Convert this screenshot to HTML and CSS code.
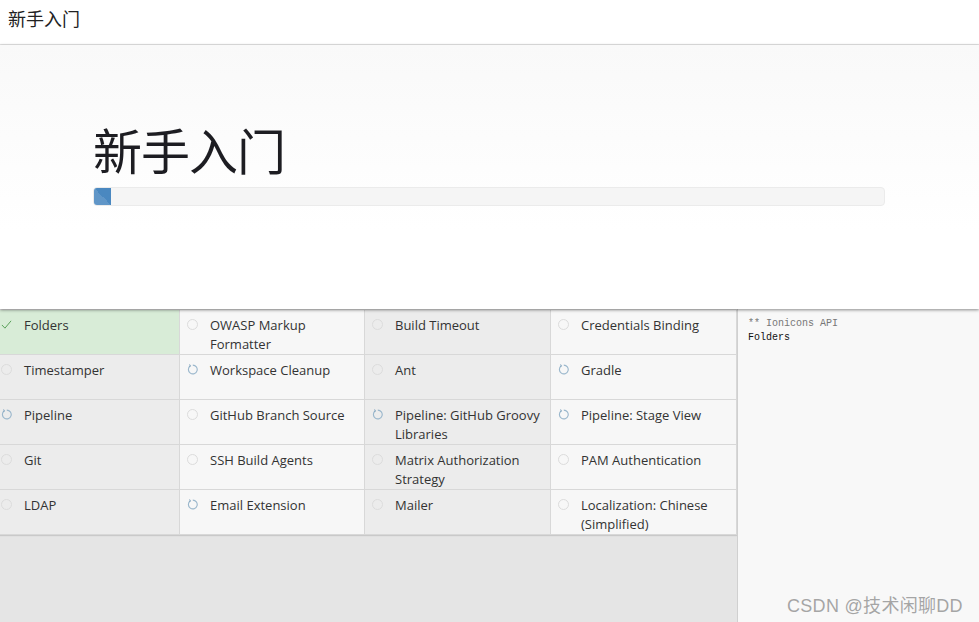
FILE: index.html
```html
<!DOCTYPE html>
<html lang="zh-CN">
<head>
<meta charset="utf-8">
<title>新手入门</title>
<link rel="stylesheet" href="styles.css">
</head>
<body>
<header class="top-bar">新手入门</header>
<section class="hero">
  <h1 class="hero-title">新手入门</h1>
  <div class="progress"><div class="progress-fill" style="width:17px"></div></div>
</section>
<main class="main">
  <div class="plugins">
    <ul class="grid">
      <li class="cell done"><svg class="ico" viewBox="0 0 12 12"><path d="M1 6.5 L4.3 10 L11 2" fill="none" stroke="#4f9a4f" stroke-width="1"/></svg><span class="name">Folders</span></li>
      <li class="cell"><span class="ico circle"></span><span class="name">OWASP Markup Formatter</span></li>
      <li class="cell"><span class="ico circle"></span><span class="name">Build Timeout</span></li>
      <li class="cell"><span class="ico circle"></span><span class="name">Credentials Binding</span></li>

      <li class="cell"><span class="ico circle"></span><span class="name">Timestamper</span></li>
      <li class="cell"><svg class="ico" viewBox="0 0 12 12"><path d="M6.3 1.2 A4.8 4.8 0 1 1 3.4 2.2" fill="none" stroke="#9ab7cc" stroke-width="1.2"/><path d="M2.6 0.6 L3.8 2.1 L2.3 3.2" fill="none" stroke="#8aaac2" stroke-width="1.1"/></svg><span class="name">Workspace Cleanup</span></li>
      <li class="cell"><span class="ico circle"></span><span class="name">Ant</span></li>
      <li class="cell"><svg class="ico" viewBox="0 0 12 12"><path d="M6.3 1.2 A4.8 4.8 0 1 1 3.4 2.2" fill="none" stroke="#9ab7cc" stroke-width="1.2"/><path d="M2.6 0.6 L3.8 2.1 L2.3 3.2" fill="none" stroke="#8aaac2" stroke-width="1.1"/></svg><span class="name">Gradle</span></li>

      <li class="cell"><svg class="ico" viewBox="0 0 12 12"><path d="M6.3 1.2 A4.8 4.8 0 1 1 3.4 2.2" fill="none" stroke="#9ab7cc" stroke-width="1.2"/><path d="M2.6 0.6 L3.8 2.1 L2.3 3.2" fill="none" stroke="#8aaac2" stroke-width="1.1"/></svg><span class="name">Pipeline</span></li>
      <li class="cell"><span class="ico circle"></span><span class="name">GitHub Branch Source</span></li>
      <li class="cell"><svg class="ico" viewBox="0 0 12 12"><path d="M6.3 1.2 A4.8 4.8 0 1 1 3.4 2.2" fill="none" stroke="#9ab7cc" stroke-width="1.2"/><path d="M2.6 0.6 L3.8 2.1 L2.3 3.2" fill="none" stroke="#8aaac2" stroke-width="1.1"/></svg><span class="name">Pipeline: GitHub Groovy Libraries</span></li>
      <li class="cell"><svg class="ico" viewBox="0 0 12 12"><path d="M6.3 1.2 A4.8 4.8 0 1 1 3.4 2.2" fill="none" stroke="#9ab7cc" stroke-width="1.2"/><path d="M2.6 0.6 L3.8 2.1 L2.3 3.2" fill="none" stroke="#8aaac2" stroke-width="1.1"/></svg><span class="name">Pipeline: Stage View</span></li>

      <li class="cell"><span class="ico circle"></span><span class="name">Git</span></li>
      <li class="cell"><span class="ico circle"></span><span class="name">SSH Build Agents</span></li>
      <li class="cell"><span class="ico circle"></span><span class="name">Matrix Authorization Strategy</span></li>
      <li class="cell"><span class="ico circle"></span><span class="name">PAM Authentication</span></li>

      <li class="cell"><span class="ico circle"></span><span class="name">LDAP</span></li>
      <li class="cell"><svg class="ico" viewBox="0 0 12 12"><path d="M6.3 1.2 A4.8 4.8 0 1 1 3.4 2.2" fill="none" stroke="#9ab7cc" stroke-width="1.2"/><path d="M2.6 0.6 L3.8 2.1 L2.3 3.2" fill="none" stroke="#8aaac2" stroke-width="1.1"/></svg><span class="name">Email Extension</span></li>
      <li class="cell"><span class="ico circle"></span><span class="name">Mailer</span></li>
      <li class="cell"><span class="ico circle"></span><span class="name">Localization: Chinese (Simplified)</span></li>
    </ul>
  </div>
  <aside class="log">
    <div class="log-dim">** Ionicons API</div>
    <div class="log-line">Folders</div>
  </aside>
</main>
<div class="watermark">CSDN @技术闲聊DD</div>
</body>
</html>
```
FILE: styles.css
```css
html, body {
  margin: 0;
  padding: 0;
}
body {
  width: 979px;
  height: 622px;
  overflow: hidden;
  background: #fff;
  font-family: "Open Sans", "Noto Sans CJK SC", sans-serif;
  color: #333;
  position: relative;
}
.top-bar {
  height: 45px;
  box-sizing: border-box;
  border-bottom: 1px solid #e5e5e5;
  padding: 6px 0 0 8px;
  font-family: "Noto Sans CJK SC", sans-serif;
  font-size: 18px;
  line-height: 24px;
  color: #222;
}
.hero {
  height: 264px;
  box-sizing: border-box;
  background: linear-gradient(#f9f9f9, #ffffff 70%);
  padding: 74px 94px 0 93px;
  position: relative;
  z-index: 1;
  box-shadow: 0 1px 3px rgba(0,0,0,0.45);
}
.hero-title {
  margin: 0;
  font-family: "Noto Sans CJK SC", sans-serif;
  font-weight: 400;
  font-size: 49px;
  line-height: 60px;
  color: #1d1d22;
  letter-spacing: -1px;
}
.progress {
  margin-top: 8px;
  width: 792px;
  height: 19px;
  box-sizing: border-box;
  background: #f5f5f5;
  border: 1px solid #ebebeb;
  border-radius: 4px;
  overflow: hidden;
}
.progress-fill {
  height: 100%;
  background-color: #4a88c0;
  background-image: linear-gradient(45deg, rgba(255,255,255,.12) 50%, transparent 50%);
  background-size: 17px 17px;
}
.main {
  display: flex;
  height: 313px;
}
.plugins {
  flex: 0 0 737px;
  background: #e5e5e5;
  overflow: hidden;
  border-right: 1px solid #d0d0d0;
}
.grid {
  list-style: none;
  margin: 1px 0 0 -6px;
  padding: 0;
  width: 743px;
  display: grid;
  grid-template-columns: 186px 185px 186px 186px;
  box-shadow: 0 1px 1px rgba(0,0,0,0.12);
}
.cell {
  height: 38px;
  border-right: 1px solid #d8d8d8;
  border-bottom: 1px solid #d8d8d8;
  background: #ececec;
  display: flex;
  align-items: flex-start;
  padding: 6px 4px 0 7px;
  font-size: 13px;
  line-height: 19px;
  color: #333;
}
.cell:nth-child(even) { background: #f7f7f7; }
.cell.done { background: #d8ecd7; }
.ico {
  display: block;
  flex: 0 0 11px;
  width: 11px;
  height: 11px;
  margin-top: 3px;
  margin-right: 12px;
}
.circle {
  box-sizing: border-box;
  border: 1px solid #dcdcdc;
  border-radius: 50%;
}
.name { display: block; }
.log {
  flex: 1;
  background: #f8f8f8;
  padding: 8px 10px;
  font-family: "Liberation Mono", "DejaVu Sans Mono", monospace;
  font-size: 10px;
  line-height: 14px;
}
.log-dim { color: #777; }
.log-line { color: #111; }
.watermark {
  position: absolute;
  left: 787px;
  top: 591px;
  font-family: "Liberation Sans", "Noto Sans CJK SC", sans-serif;
  font-size: 18px;
  letter-spacing: 0.3px;
  color: #a5a5a5;
  text-shadow: 0 0 1px #fff;
}
```
